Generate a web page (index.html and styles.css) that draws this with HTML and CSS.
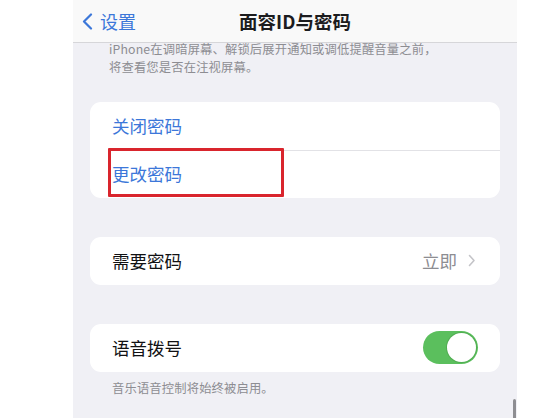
FILE: index.html
```html
<!DOCTYPE html>
<html lang="zh-CN">
<head>
<meta charset="utf-8">
<title>面容ID与密码</title>
<link rel="stylesheet" href="styles.css">
</head>
<body>
<div class="screen">
  <header class="nav">
    <div class="back">
      <svg class="back-chevron" width="11" height="17" viewBox="0 0 11 17" aria-hidden="true">
        <path d="M9 1.5 L2 8.5 L9 15.5" fill="none" stroke="#3c77d9" stroke-width="2.2" stroke-linecap="round" stroke-linejoin="round"/>
      </svg>
      <span class="back-label">设置</span>
    </div>
    <div class="title">面容ID与密码</div>
    <div class="nav-spacer"></div>
  </header>

  <main class="content">
    <div class="top-note">
      <p class="footnote">iPhone在调暗屏幕、解锁后展开通知或调低提醒音量之前，</p>
      <p class="footnote">将查看您是否在注视屏幕。</p>
    </div>

    <section class="group group-first">
      <div class="row link">关闭密码</div>
      <div class="row link marked">更改密码<span class="mark"></span></div>
    </section>

    <section class="group">
      <div class="row">
        <span class="label">需要密码</span>
        <span class="detail">立即
          <svg class="chev" width="8" height="13" viewBox="0 0 8 13" aria-hidden="true">
            <path d="M1.5 1.5 L6 6.5 L1.5 11.5" fill="none" stroke="#c4c4c8" stroke-width="1.6" stroke-linecap="round" stroke-linejoin="round"/>
          </svg>
        </span>
      </div>
    </section>

    <section class="group">
      <div class="row">
        <span class="label">语音拨号</span>
        <span class="toggle"><span class="knob"></span></span>
      </div>
    </section>
    <p class="footnote bottom-note">音乐语音控制将始终被启用。</p>
  </main>
  <div class="scrollbar"></div>
</div>
</body>
</html>
```

FILE: styles.css
```css
html, body {
  margin: 0;
  padding: 0;
  background: #ffffff;
}

body {
  font-family: "Noto Sans CJK SC", "Noto Sans", sans-serif;
}

.screen {
  position: relative;
  margin-left: 73px;
  width: 444px;
  height: 418px;
  background: #f0f0f5;
  overflow: hidden;
}

.nav {
  height: 42px;
  background: #f9f9f9;
  border-bottom: 1.5px solid #d6d6d9;
  display: grid;
  grid-template-columns: 1fr auto 1fr;
  align-items: center;
}

.back {
  display: flex;
  align-items: center;
  padding-left: 9px;
  gap: 7px;
  color: #3c77d9;
  font-size: 18px;
  line-height: 22px;
}

.back-chevron {
  display: block;
}

.title {
  font-size: 18.5px;
  font-weight: 600;
  color: #1c1c1e;
  line-height: 22px;
}

.content {
  padding: 0 17px;
  display: flex;
  flex-direction: column;
}

.footnote {
  margin: 0;
  font-size: 12.3px;
  line-height: 17.9px;
  letter-spacing: 0.15px;
  color: #8d8d92;
  white-space: nowrap;
}

.top-note {
  padding: 0 19px;
  margin-top: -2px;
  display: flex;
  flex-direction: column;
}

.group {
  background: #ffffff;
  border-radius: 11px;
  margin-top: 39px;
  display: flex;
  flex-direction: column;
}

.group-first {
  margin-top: 25px;
}

.row {
  position: relative;
  height: 48px;
  padding: 0 22px;
  display: flex;
  align-items: center;
  justify-content: space-between;
  font-size: 17.5px;
  color: #111113;
}

.row.link {
  color: #3c77d9;
}

.row + .row::before {
  content: "";
  position: absolute;
  top: 0;
  left: 20px;
  right: 0;
  height: 1px;
  background: #e2e2e6;
}

.mark {
  position: absolute;
  left: 18px;
  top: -2px;
  width: 170px;
  height: 43px;
  border: 3px solid #d9252d;
  border-radius: 1px;
}

.detail {
  display: flex;
  align-items: center;
  gap: 11px;
  color: #8d8d92;
  padding-right: 2px;
}

.chev {
  display: block;
}

.toggle {
  position: relative;
  width: 55px;
  height: 33px;
  border-radius: 17px;
  background: #5bbf5d;
  display: flex;
  justify-content: flex-end;
  align-items: center;
  padding: 0 2px;
  box-sizing: border-box;
}

.knob {
  width: 29px;
  height: 29px;
  border-radius: 50%;
  background: #ffffff;
  box-shadow: 0 0 0 1px rgba(60, 140, 60, 0.35);
}

.bottom-note {
  padding: 0 22px;
  margin-top: 8px;
}

.scrollbar {
  position: absolute;
  right: 1px;
  bottom: 0;
  width: 3px;
  height: 19px;
  border-radius: 2px 2px 0 0;
  background: #8e8e92;
}
```
